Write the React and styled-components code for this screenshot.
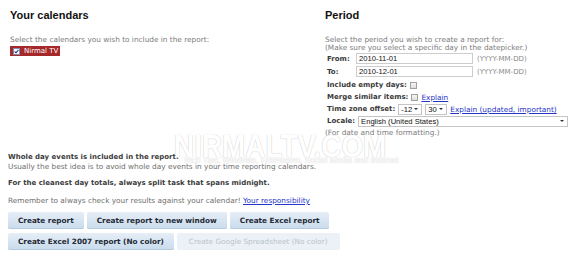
import React from 'react';
import styled, { createGlobalStyle } from 'styled-components';

const GlobalStyle = createGlobalStyle`
    body {
        margin: 0;
        background: #fff;
        font-family: "DejaVu Sans", Verdana, sans-serif;
    }
`;

const Page = styled.div`
    position: relative;
    width: 574px;
    height: 254px;
    padding: 8px 8px 0 8px;
    box-sizing: border-box;
    overflow: hidden;
`;

const Top = styled.div`
    display: grid;
    grid-template-columns: 317px 1fr;
`;

const Column = styled.div`
    display: flex;
    flex-direction: column;
    padding-left: ${(p) => p.indent || 0}px;
`;

const Heading = styled.h2`
    margin: 1px 0 0 0;
    font-family: "Liberation Sans", Arial, sans-serif;
    font-size: 11px;
    line-height: 13px;
    font-weight: bold;
    color: #111;
`;

const Hint = styled.div`
    margin-top: ${(p) => p.top || 0}px;
    font-size: 7.35px;
    line-height: 8px;
    color: #7c7c7c;
    white-space: nowrap;
`;

const Chip = styled.div`
    align-self: flex-start;
    display: flex;
    align-items: center;
    gap: 4px;
    margin: 2px 0 0 0;
    height: 10px;
    padding: 0 2px 0 3px;
    background: #a5282b;
    color: #fff;
    font-size: 7px;
`;

const Box = styled.span`
    display: inline-flex;
    align-items: center;
    justify-content: center;
    width: 7px;
    height: 7px;
    box-sizing: border-box;
    border: 1px solid ${(p) => (p.checked ? '#7b8fb0' : '#a0a0a0')};
    background: ${(p) => (p.checked ? '#fff' : 'linear-gradient(#f6f6f6, #dedede)')};
`;

const Fields = styled.div`
    display: grid;
    grid-template-columns: 25px 117px auto;
    column-gap: 4px;
    row-gap: 2px;
    margin: 1px 0 0 2px;
    align-items: center;
`;

const Label = styled.span`
    font-size: 7px;
    font-weight: bold;
    color: #3a3a3a;
    white-space: nowrap;
`;

const Input = styled.div`
    height: 11px;
    box-sizing: border-box;
    border: 1px solid #cdcdcd;
    padding-left: 2px;
    font-family: "Liberation Sans", Arial, sans-serif;
    font-size: 7.6px;
    line-height: 9px;
    color: #111;
`;

const Format = styled.span`
    font-size: 7px;
    color: #8a8a8a;
`;

const Option = styled.div`
    display: flex;
    align-items: center;
    gap: 3px;
    height: 12px;
    margin: ${(p) => p.top || 0}px 0 0 2px;
`;

const Select = styled.div`
    display: flex;
    align-items: center;
    justify-content: space-between;
    width: ${(p) => p.width}px;
    height: 11px;
    box-sizing: border-box;
    border: 1px solid #c4c4c4;
    padding: 0 3px 0 2px;
    font-family: "Liberation Sans", Arial, sans-serif;
    font-size: 7.6px;
    color: #111;
`;

const Arrow = styled.span`
    width: 0;
    height: 0;
    border-left: 2px solid transparent;
    border-right: 2px solid transparent;
    border-top: 2px solid #333;
`;

const Link = styled.a`
    font-size: 7.35px;
    color: #2435c8;
    text-decoration: underline;
    white-space: nowrap;
`;

const Notes = styled.div`
    margin-top: 16px;
    display: flex;
    flex-direction: column;
`;

const Strong = styled.div`
    font-size: 7px;
    line-height: 9px;
    font-weight: bold;
    color: #3c3c3c;
    margin-top: ${(p) => p.top || 0}px;
`;

const Plain = styled.div`
    font-size: 7.35px;
    line-height: 9px;
    color: #6e6e6e;
    margin-top: ${(p) => p.top || 0}px;
    white-space: nowrap;
`;

const Buttons = styled.div`
    display: flex;
    flex-wrap: wrap;
    gap: 4px 3px;
    margin-top: 7px;
    width: 345px;
`;

const Button = styled.button`
    height: 17px;
    padding: 0 ${(p) => (p.disabled ? 12 : 10)}px;
    border: none;
    border-radius: 2px;
    font-family: "DejaVu Sans", Verdana, sans-serif;
    font-size: 7.3px;
    font-weight: ${(p) => (p.disabled ? 'normal' : 'bold')};
    color: ${(p) => (p.disabled ? '#b9c3cc' : '#1f2a36')};
    background: ${(p) =>
        p.disabled ? '#ebf1f7' : 'linear-gradient(#e6eef7, #c9dbec)'};
    box-shadow: ${(p) => (p.disabled ? 'none' : 'inset 0 -1px 0 #b5cadf')};
`;

const Watermark = styled.div`
    position: absolute;
    left: 174px;
    top: 134px;
    pointer-events: none;
    display: flex;
    flex-direction: column;
    align-items: flex-start;
`;

const Brand = styled.div`
    font-family: "Liberation Sans", Arial, sans-serif;
    font-size: 31px;
    line-height: 26px;
    font-weight: bold;
    color: #fff;
    transform: scaleX(0.9);
    transform-origin: left;
    text-shadow: 0 0 1px #cfcfcf, 0 0 1px #cfcfcf;
    white-space: nowrap;
`;

const Tagline = styled.div`
    margin: -4px 0 0 9px;
    font-family: "Liberation Sans", Arial, sans-serif;
    font-size: 8.3px;
    line-height: 8px;
    color: #fff;
    text-shadow: 0 0 1px #bdbdbd;
    white-space: nowrap;
`;

const Check = () => (
    <svg width="5" height="5" viewBox="0 0 5 5">
        <path d="M0.6 2.4 L2 3.9 L4.4 0.8" fill="none" stroke="#2b3f8c" strokeWidth="1.1" />
    </svg>
);

const App = () => {
    return (
        <>
            <GlobalStyle />
            <Page>
                <Top>
                    <Column indent={2}>
                        <Heading>Your calendars</Heading>
                        <Hint top={14}>Select the calendars you wish to include in the report:</Hint>
                        <Chip>
                            <Box checked>
                                <Check />
                            </Box>
                            Nirmal TV
                        </Chip>
                    </Column>
                    <Column>
                        <Heading>Period</Heading>
                        <Hint top={14}>
                            Select the period you wish to create a report for:
                            <br />
                            (Make sure you select a specific day in the datepicker.)
                        </Hint>
                        <Fields>
                            <Label>From:</Label>
                            <Input>2010-11-01</Input>
                            <Format>(YYYY-MM-DD)</Format>
                            <Label>To:</Label>
                            <Input>2010-12-01</Input>
                            <Format>(YYYY-MM-DD)</Format>
                        </Fields>
                        <Option top={2}>
                            <Label>Include empty days:</Label>
                            <Box />
                        </Option>
                        <Option>
                            <Label>Merge similar items:</Label>
                            <Box />
                            <Link href="#">Explain</Link>
                        </Option>
                        <Option>
                            <Label>Time zone offset:</Label>
                            <Select width={24}>
                                -12 <Arrow />
                            </Select>
                            <Select width={22}>
                                30 <Arrow />
                            </Select>
                            <Link href="#">Explain (updated, important)</Link>
                        </Option>
                        <Option>
                            <Label>Locale:</Label>
                            <Select width={210}>
                                English (United States) <Arrow />
                            </Select>
                        </Option>
                        <Hint top={2}>(For date and time formatting.)</Hint>
                    </Column>
                </Top>
                <Notes>
                    <Strong>Whole day events is included in the report.</Strong>
                    <Plain>Usually the best idea is to avoid whole day events in your time reporting calendars.</Plain>
                    <Strong top={8}>For the cleanest day totals, always split task that spans midnight.</Strong>
                    <Plain top={8}>
                        Remember to always check your results against your calendar!{' '}
                        <Link href="#">Your responsibility</Link>
                    </Plain>
                </Notes>
                <Buttons>
                    <Button>Create report</Button>
                    <Button>Create report to new window</Button>
                    <Button>Create Excel report</Button>
                    <Button>Create Excel 2007 report (No color)</Button>
                    <Button disabled>Create Google Spreadsheet (No color)</Button>
                </Buttons>
                <Watermark>
                    <Brand>NIRMALTV.COM</Brand>
                    <Tagline>Tech Tips, Windows, Freewares, Social Media and Internet</Tagline>
                </Watermark>
            </Page>
        </>
    );
};

export default App;
